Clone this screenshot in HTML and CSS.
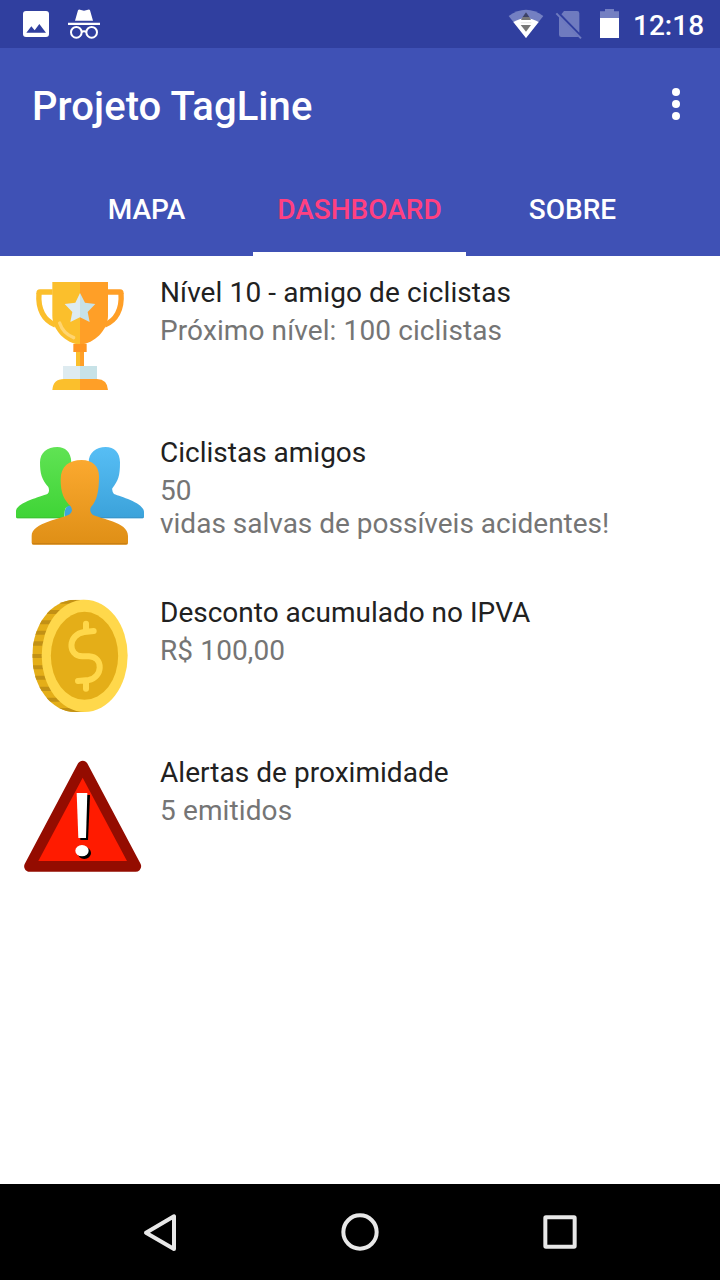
FILE: index.html
```html
<!DOCTYPE html>
<html lang="pt-BR">
<head>
<meta charset="utf-8">
<title>Projeto TagLine</title>
<link rel="stylesheet" href="styles.css">
</head>
<body>
<div class="screen">
  <div class="status-bar">
    <svg class="status-left" viewBox="0 0 360 144">
      <rect x="69" y="33" width="78" height="78" rx="9" fill="#fff"/>
      <path d="M79 98 94 79 104 91 118 72 138 98Z" fill="#303f9f"/>
      <path d="M225 62 234 31Q236 28 240 29L252 32 264 29Q269 28 270 31L279 62ZM204 68H300V75H204Z" fill="#fff"/>
      <g fill="none" stroke="#fff" stroke-width="6"><circle cx="229" cy="97" r="16"/><circle cx="275" cy="97" r="16"/><path d="M244 96Q252 92 260 96"/></g>
    </svg>
    <div class="status-right">
      <svg class="status-icons" viewBox="0 0 390 144">
        <path d="M26 48Q78 10 130 48L78 114Z" fill="#7480c2"/>
        <path d="M40 66Q78 43 116 66L78 114Z" fill="#fff"/>
        <path d="M78 37 88 51H68Z" fill="#3c4268"/>
        <path d="M68 51H88L93 60H63Z" fill="#777"/>
        <path d="M62 66H94V70H62Z" fill="#ececec"/>
        <path d="M62 75H93L78 95Z" fill="#777"/>
        <path d="M192 33H231Q238 33 238 40V98L184 43ZM177 50 236 111H184Q177 111 177 104Z" fill="#6f7bbf"/>
        <path d="M169 40 243 115" stroke="#6f7bbf" stroke-width="6"/>
        <path d="M300 54V34H315V27H342V34H357V54Z" fill="#7480c2"/>
        <path d="M300 54H357V114H300Z" fill="#fff"/>
      </svg>
      <span class="clock">12:18</span>
    </div>
  </div>

  <header class="app-bar">
    <div class="toolbar">
      <h1 class="app-title">Projeto TagLine</h1>
      <svg class="overflow" viewBox="0 0 8 32"><circle cx="4" cy="4" r="4"/><circle cx="4" cy="16" r="4"/><circle cx="4" cy="28" r="4"/></svg>
    </div>
    <nav class="tabs">
      <span class="tab">MAPA</span>
      <span class="tab tab-active">DASHBOARD</span>
      <span class="tab">SOBRE</span>
    </nav>
  </header>

  <main class="list">
    <section class="item">
      <svg class="item-icon" viewBox="-12 6 384 384">
        <path d="M98 66H60Q57 66 57 70C53 118 72 152 106 165" fill="none" stroke="#fbbf2c" stroke-width="16"/>
        <path d="M262 66H300Q303 66 303 70C307 118 288 152 254 165" fill="none" stroke="#ff9f27" stroke-width="16"/>
        <path d="M97 36H180V224C137 220 97 180 97 137Z" fill="#fbbf2c"/>
        <path d="M180 36H264V137C264 180 223 220 180 224Z" fill="#ff9f27"/>
        <path d="M168 240H180V290H168Z" fill="#fbbf2c"/>
        <path d="M180 240H192V290H180Z" fill="#ff9f27"/>
        <path d="M160 222H200V246H160Z" fill="#ff9520"/>
        <path d="M129 288H180V328H129Z" fill="#deebf0"/>
        <path d="M180 288H231V328H180Z" fill="#c7e2e7"/>
        <path d="M97 360Q99 327 132 327H180V360Z" fill="#fbbf2c"/>
        <path d="M180 327H231Q262 328 264 360H180Z" fill="#ff9f27"/>
        <path d="M180 69 166 98 134 102 157 126 151 156 180 142Z" fill="#deebf0"/>
        <path d="M180 69 195 98 226 102 203 126 209 156 180 142Z" fill="#c7e2e7"/>
        <path d="M119 159Q129 190 161 203" fill="none" stroke="#ffd571" stroke-width="10" stroke-linecap="round"/>
      </svg>
      <div class="item-text item-text-wide">
        <h2 class="item-title">Nível 10 - amigo de ciclistas</h2>
        <p class="item-detail">Próximo nível: 100 ciclistas</p>
      </div>
    </section>

    <section class="item">
      <svg class="item-icon" viewBox="33 -9 384 384">
        <defs>
          <linearGradient id="green" x2="0" y2="1"><stop stop-color="#60e354"/><stop offset="1" stop-color="#3fd436"/></linearGradient>
          <linearGradient id="blue" x2="0" y2="1"><stop stop-color="#57bef5"/><stop offset="1" stop-color="#3ba2da"/></linearGradient>
          <linearGradient id="orange" x2="0" y2="1"><stop stop-color="#fba92f"/><stop offset="1" stop-color="#df8f16"/></linearGradient>
        </defs>
        <path d="M302 36C328 36 345 53 345 82C345 123 340 137 322 160Q320 168 327 177C350 186 417 204 417 231V245Q417 250 412 250H180Q175 224 187 213L250 180L270 110L251 82C251 53 274 36 302 36Z" fill="url(#blue)"/>
        <path d="M157 36C180 36 198 50 199 82L190 186L202 213Q194 208 184 217Q177 224 178 250H38Q33 250 33 245V227C38 201 105 186 128 176Q135 170 130 156C110 134 105 115 105 82C105 53 127 36 157 36Z" fill="url(#green)"/>
        <path d="M35 248H178" stroke="#3cc434" stroke-width="3"/><path d="M178 248H415" stroke="#3995c9" stroke-width="3"/>
        <path d="M230 75C263 75 282 94 282 124C282 169 276 197 258 216Q252 227 261 238C284 253 369 259 369 303V323Q369 329 363 329H86Q80 329 80 323V303C80 262 173 252 195 237Q205 229 198 215C176 193 167 173 167 134C167 94 192 75 230 75Z" fill="url(#orange)"/>
        <path d="M82 326H367" stroke="#c98014" stroke-width="4"/>
      </svg>
      <div class="item-text">
        <h2 class="item-title">Ciclistas amigos</h2>
        <p class="item-detail">50<br>vidas salvas de possíveis acidentes!</p>
      </div>
    </section>

    <section class="item">
      <svg class="item-icon" viewBox="-12 6 384 384">
        <defs><clipPath id="edge"><path d="M194 29H166C94 29 37 104 37 197S94 366 166 366H194Z"/></clipPath></defs>
        <g clip-path="url(#edge)">
          <path d="M30 20H194V370H30Z" fill="#e4ae18"/>
          <path d="M100 29H194V41H100ZM80 60H130V72H80ZM50 91H110V103H50ZM40 122H95V134H40ZM30 154H90V167H30ZM30 192H80V204H30ZM30 226H90V238H30ZM30 257H95V269H30ZM40 290H100V303H40ZM60 323H130V335H60ZM100 354H194V366H100Z" fill="#c29115"/>
        </g>
        <ellipse cx="194" cy="197.500" rx="129" ry="168.500" fill="#ffd84b"/>
        <ellipse cx="193.500" cy="197.500" rx="101" ry="132" fill="#e4ae18"/>
        <path d="M198 101V124M221 123 193 126C144 132 141 198 187 199H207C252 201 248 263 206 270L174 273M198 272V296" fill="none" stroke="#ffd84b" stroke-width="18" stroke-linecap="round" stroke-linejoin="round"/>
      </svg>
      <div class="item-text">
        <h2 class="item-title">Desconto acumulado no IPVA</h2>
        <p class="item-detail item-detail-short">R$ 100,00</p>
      </div>
    </section>

    <section class="item">
      <svg class="item-icon" viewBox="3 6 384 384">
        <path d="M203 49 44 349H362Z" fill="#940c00" stroke="#940c00" stroke-width="33" stroke-linejoin="round"/>
        <path d="M203 83 70 333H336Z" fill="#ff1b00"/>
        <path d="M194 135H225L219 270H196Z"/><ellipse cx="208" cy="309" rx="20" ry="18"/>
        <path d="M185 129H217L213 264H190Z" fill="#fff"/><ellipse cx="201" cy="302" rx="20" ry="17" fill="#fff"/>
      </svg>
      <div class="item-text">
        <h2 class="item-title item-title-alert">Alertas de proximidade</h2>
        <p class="item-detail item-detail-short">5 emitidos</p>
      </div>
    </section>
  </main>

  <footer class="nav-bar">
    <svg class="nav-icon" viewBox="0 0 120 120"><path d="M18 62 102 13V111Z" stroke-linejoin="round"/></svg>
    <svg class="nav-icon" viewBox="0 0 120 120"><circle cx="60" cy="60" r="50"/></svg>
    <svg class="nav-icon" viewBox="0 0 120 120"><rect x="16" y="16" width="88" height="88" rx="2"/></svg>
  </footer>
</div>
</body>
</html>
```
FILE: styles.css
```css
* { box-sizing: border-box; margin: 0; padding: 0; }
body { background: #fff; font-family: Roboto, sans-serif; }
svg { display: block; flex: none; }

.screen { width: 720px; height: 1280px; display: flex; flex-direction: column; overflow: hidden; }

.status-bar { height: 48px; background: #303f9f; display: flex; justify-content: space-between; }
.status-left { width: 120px; height: 48px; }
.status-right { display: flex; width: 220px; }
.status-icons { width: 130px; height: 48px; }
.clock { margin-left: 3px; color: #fff; font-size: 28px; font-weight: 500; line-height: 51px; white-space: nowrap; }

.app-bar { height: 208px; background: #3f51b5; color: #fff; display: flex; flex-direction: column; }
.toolbar { height: 112px; padding: 6px 40px 0 32px; display: flex; justify-content: space-between; align-items: center; }
.app-title { font-size: 40px; font-weight: 500; line-height: 48px; letter-spacing: 0.07px; }
.overflow { width: 8px; height: 32px; margin-bottom: 6px; fill: #fff; }
.tabs { height: 96px; padding: 0 41px 0 40px; display: grid; grid-template-columns: repeat(3, 213px); }
.tab { display: flex; align-items: center; justify-content: center; font-size: 28px; font-weight: 500; padding-top: 6px; border-bottom: 4px solid transparent; }
.tab-active { color: #ff4081; border-bottom-color: #fff; }

.list { flex: 1; }
.item { height: 160px; padding: 16px; display: flex; gap: 16px; }
.item-icon { width: 128px; height: 128px; }
.item-text { padding-top: 4px; display: flex; flex-direction: column; gap: 5px; white-space: nowrap; }
.item-text-wide { letter-spacing: 0.11px; }
.item-title { color: #212121; font-size: 28px; font-weight: 400; line-height: 33px; }
.item-title-alert { letter-spacing: 0.04px; }
.item-detail { color: #757575; font-size: 28px; line-height: 33px; }
.item-detail-short { letter-spacing: 0.12px; }

.nav-bar { height: 96px; background: #000; display: flex; justify-content: center; align-items: center; gap: 160px; }
.nav-icon { width: 40px; height: 40px; fill: none; stroke: #e8e8e8; stroke-width: 12; }
```
